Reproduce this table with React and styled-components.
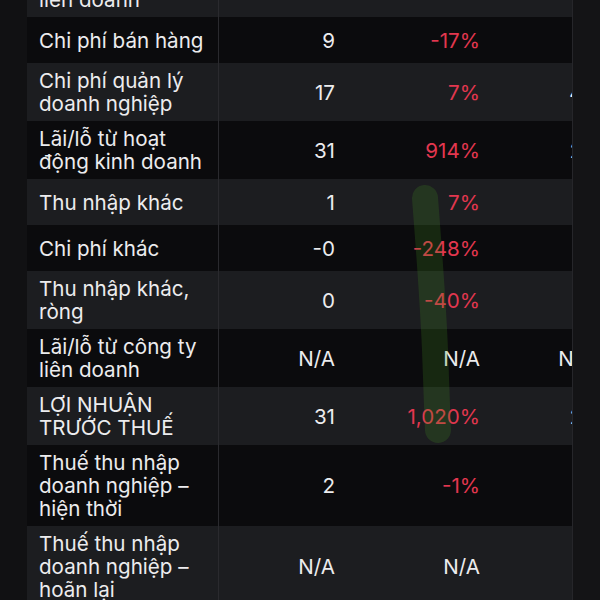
import React from "react";
import styled, { createGlobalStyle } from "styled-components";

const GlobalStyle = createGlobalStyle`
  html, body {
    margin: 0;
    padding: 0;
    background: #121214;
    overflow: hidden;
  }
  body {
    font-family: Inter, "Noto Sans", "Liberation Sans", sans-serif;
  }
`;

const Screen = styled.div`
  width: 600px;
  height: 600px;
  display: flex;
  overflow: hidden;
`;

const Side = styled.div`
  width: ${({ w }) => w}px;
  flex-shrink: 0;
  background: ${({ bg }) => bg};
`;

const TableWrap = styled.div`
  position: relative;
  width: 546px;
  flex-shrink: 0;
  overflow: hidden;
  border-right: 1px solid #26262a;
  box-sizing: border-box;
`;

const Table = styled.div`
  margin-top: -41px;
  display: flex;
  flex-direction: column;
`;

const Row = styled.div`
  display: grid;
  grid-template-columns: 192px 128px 145px 115px;
  background: ${({ dark }) => (dark ? "#0b0b0d" : "#1c1d20")};
`;

const Label = styled.div`
  min-height: 46px;
  box-sizing: border-box;
  padding: 6px 6px 6px 12px;
  border-right: 1px solid #2a2a2e;
  display: flex;
  flex-direction: column;
  justify-content: center;
  color: #ececee;
  font-size: 20.6px;
  line-height: 23px;
  white-space: nowrap;
`;

const Value = styled.div`
  display: flex;
  align-items: center;
  justify-content: flex-end;
  padding-right: 12px;
  font-size: 20.6px;
  line-height: 23px;
  white-space: nowrap;
  color: ${({ tone }) => (tone === "red" ? "#e3374f" : "#ececee")};
`;

const Marker = styled.svg`
  position: absolute;
  left: 0;
  top: 0;
  pointer-events: none;
`;

const rows = [
  { label: ["Lãi/lỗ từ công ty", "liên doanh"], a: "N/A", b: "N/A", c: "N/A" },
  { label: ["Chi phí bán hàng"], a: "9", b: "-17%", c: "11", red: true },
  { label: ["Chi phí quản lý", "doanh nghiệp"], a: "17", b: "7%", c: "45", red: true },
  { label: ["Lãi/lỗ từ hoạt", "động kinh doanh"], a: "31", b: "914%", c: "28", red: true },
  { label: ["Thu nhập khác"], a: "1", b: "7%", c: "1", red: true },
  { label: ["Chi phí khác"], a: "-0", b: "-248%", c: "-0", red: true },
  { label: ["Thu nhập khác,", "ròng"], a: "0", b: "-40%", c: "0", red: true },
  { label: ["Lãi/lỗ từ công ty", "liên doanh"], a: "N/A", b: "N/A", c: "N/A" },
  { label: ["LỢI NHUẬN", "TRƯỚC THUẾ"], a: "31", b: "1,020%", c: "28", red: true },
  { label: ["Thuế thu nhập", "doanh nghiệp –", "hiện thời"], a: "2", b: "-1%", c: "2", red: true },
  { label: ["Thuế thu nhập", "doanh nghiệp –", "hoãn lại"], a: "N/A", b: "N/A", c: "0" },
];

export default function App() {
  return (
    <Screen>
      <GlobalStyle />
      <Side w={27} bg="#111113" />
      <TableWrap>
        <Table>
          {rows.map((r, i) => (
            <Row key={i} dark={i % 2 === 1}>
              <Label>
                {r.label.map((l) => (
                  <span key={l}>{l}</span>
                ))}
              </Label>
              <Value>{r.a}</Value>
              <Value tone={r.red ? "red" : undefined}>{r.b}</Value>
              <Value>{r.c}</Value>
            </Row>
          ))}
        </Table>
        <Marker width="546" height="600" viewBox="0 0 546 600">
          <path
            d="M398 198 C402 250, 406 300, 408 350 S410 410, 411 430"
            stroke="rgba(70,145,30,0.22)"
            strokeWidth="26"
            strokeLinecap="round"
            fill="none"
          />
        </Marker>
      </TableWrap>
      <Side w={27} bg="#141416" />
    </Screen>
  );
}
